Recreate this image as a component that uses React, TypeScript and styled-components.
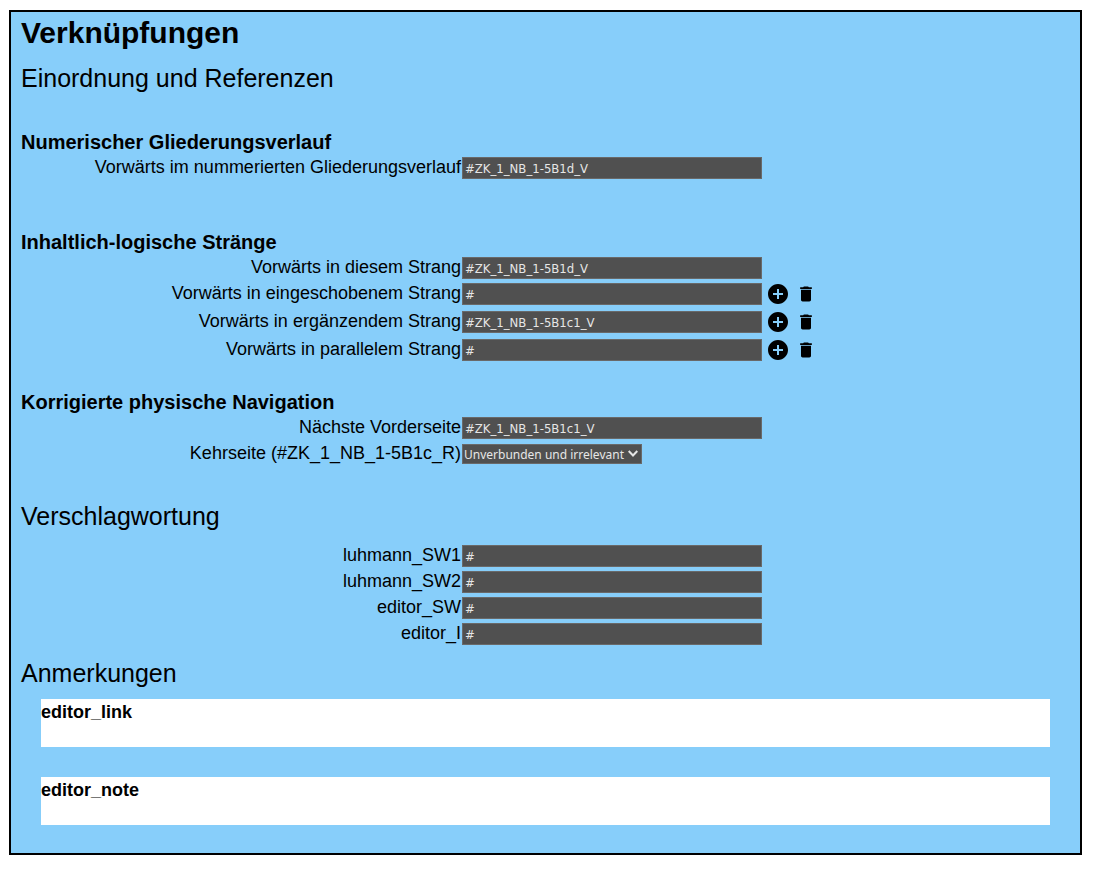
import React, { useId } from 'react';
import styled, { createGlobalStyle } from 'styled-components';
import { MdAddCircle, MdDelete } from 'react-icons/md';

const GlobalStyle = createGlobalStyle`
  *, *::before, *::after { box-sizing: border-box; }
  body {
    margin: 0;
    background: #fff;
    color: #000;
    font-family: "Liberation Sans", Arial, sans-serif;
  }
`;

const Panel = styled.main`
  display: flow-root;
  margin: 10px 14px 16px 9px;
  padding: 4px 10px 28px;
  border: 2px solid #000;
  background: #87cefa;
`;

const Title = styled.h1`
  margin: 0;
  font-size: 30px;
  line-height: 34px;
  font-weight: bold;
`;

const Subtitle = styled.h2<{ $gap: number }>`
  margin: ${({ $gap }) => $gap}px 0 0;
  font-size: 25px;
  line-height: 30px;
  font-weight: normal;
`;

const Group = styled.section<{ $gap: number }>`
  margin-top: ${({ $gap }) => $gap}px;
`;

const GroupTitle = styled.h3`
  margin: 0 0 2px;
  font-size: 20px;
  line-height: 22px;
  font-weight: bold;
`;

const Row = styled.div<{ $tall?: boolean }>`
  display: flex;
  align-items: flex-start;
  min-height: ${({ $tall }) => ($tall ? 28 : 26)}px;
`;

const Label = styled.label`
  flex: 0 0 440px;
  margin-right: 1px;
  text-align: right;
  font-size: 18px;
  line-height: 24px;
  white-space: nowrap;
`;

const TextInput = styled.input`
  width: 300px;
  height: 22px;
  margin: 2px 0 0;
  padding: 1px 2px;
  border: 1px solid #696969;
  border-radius: 0;
  background: #505050;
  color: #e6e6e6;
  font-family: "DejaVu Sans Condensed", Tahoma, sans-serif;
  font-size: 13px;
`;

const SelectWrap = styled.span`
  position: relative;
  display: flex;
  margin-top: 3px;
`;

const Select = styled.select`
  appearance: none;
  width: 180px;
  height: 20px;
  margin: 0;
  padding: 0 14px 0 1px;
  border: 1px solid #696969;
  border-radius: 0;
  background: #505050;
  color: #e6e6e6;
  font-family: "Noto Sans", Tahoma, sans-serif;
  font-size: 12px;
`;

const Chevron = styled.svg`
  position: absolute;
  top: 6px;
  right: 4px;
  pointer-events: none;
`;

const Actions = styled.span`
  display: flex;
  align-items: center;
  gap: 6px;
  height: 26px;
  margin-left: 4px;
`;

const IconButton = styled.button`
  display: flex;
  padding: 0;
  border: 0;
  background: none;
  color: #000;
  cursor: pointer;
`;

const Keywords = styled.div`
  margin-top: 12px;
`;

const Notes = styled.div`
  display: grid;
  gap: 30px;
  margin: 11px 20px 0;
`;

const Note = styled.section`
  min-height: 48px;
  background: #fff;
`;

const NoteTitle = styled.h4`
  margin: 0;
  font-size: 18px;
  line-height: 26px;
  font-weight: bold;
`;

function Field({ label, value, editable }: { label: string; value: string; editable?: boolean }) {
  const id = useId();
  return (
    <Row $tall={editable}>
      <Label htmlFor={id}>{label}</Label>
      <TextInput id={id} type="text" defaultValue={value} spellCheck={false} />
      {editable && (
        <Actions>
          <IconButton type="button" aria-label="Hinzufügen"><MdAddCircle size={24} /></IconButton>
          <IconButton type="button" aria-label="Löschen"><MdDelete size={20} /></IconButton>
        </Actions>
      )}
    </Row>
  );
}

export default function App() {
  return (
    <>
      <GlobalStyle />
      <Panel>
        <Title>Verknüpfungen</Title>
        <Subtitle $gap={13}>Einordnung und Referenzen</Subtitle>

        <Group $gap={38}>
          <GroupTitle>Numerischer Gliederungsverlauf</GroupTitle>
          <Field label="Vorwärts im nummerierten Gliederungsverlauf" value="#ZK_1_NB_1-5B1d_V" />
        </Group>

        <Group $gap={50}>
          <GroupTitle>Inhaltlich-logische Stränge</GroupTitle>
          <Field label="Vorwärts in diesem Strang" value="#ZK_1_NB_1-5B1d_V" />
          <Field label="Vorwärts in eingeschobenem Strang" value="#" editable />
          <Field label="Vorwärts in ergänzendem Strang" value="#ZK_1_NB_1-5B1c1_V" editable />
          <Field label="Vorwärts in parallelem Strang" value="#" editable />
        </Group>

        <Group $gap={26}>
          <GroupTitle>Korrigierte physische Navigation</GroupTitle>
          <Field label="Nächste Vorderseite" value="#ZK_1_NB_1-5B1c1_V" />
          <Row>
            <Label htmlFor="kehrseite">Kehrseite (#ZK_1_NB_1-5B1c_R)</Label>
            <SelectWrap>
              <Select id="kehrseite" defaultValue="irrelevant">
                <option value="irrelevant">Unverbunden und irrelevant</option>
              </Select>
              <Chevron width="10" height="8" viewBox="0 0 10 8" aria-hidden="true">
                <path d="M.7 1 5 5.5 9.3 1" fill="none" stroke="#e6e6e6" strokeWidth="2" />
              </Chevron>
            </SelectWrap>
          </Row>
        </Group>

        <Subtitle $gap={34}>Verschlagwortung</Subtitle>
        <Keywords>
          <Field label="luhmann_SW1" value="#" />
          <Field label="luhmann_SW2" value="#" />
          <Field label="editor_SW" value="#" />
          <Field label="editor_I" value="#" />
        </Keywords>

        <Subtitle $gap={11}>Anmerkungen</Subtitle>
        <Notes>
          <Note><NoteTitle>editor_link</NoteTitle></Note>
          <Note><NoteTitle>editor_note</NoteTitle></Note>
        </Notes>
      </Panel>
    </>
  );
}
